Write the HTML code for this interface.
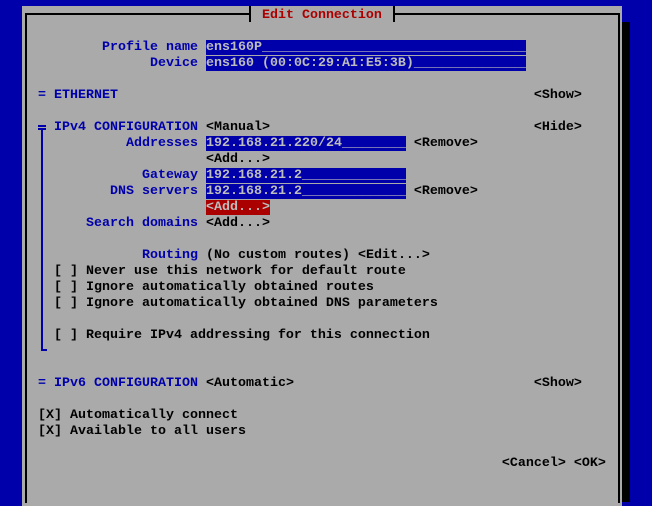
<!DOCTYPE html>
<html><head><meta charset="utf-8"><style>
html,body{margin:0;padding:0;}
body{width:652px;height:497px;background:#0000aa;position:relative;overflow:hidden;font-family:"Liberation Mono",monospace;}
.panel{position:absolute;left:22px;top:6px;width:600px;height:500px;background:#aaaaaa;}
.shadow{position:absolute;left:622px;top:22px;width:8px;height:480px;background:#000;}
.ln{position:absolute;background:#000;}
.bl{position:absolute;background:#0000aa;}
pre{position:absolute;left:6px;top:8px;margin:0;font-family:"Liberation Mono",monospace;font-size:13.33px;line-height:16px;font-weight:bold;color:#000;white-space:pre;}
.b{color:#0000aa}
.r{color:#aa0000}
.f{background:#0000aa;color:#bdbdbd}
.a{background:#aa0000;color:#bdbdbd}
</style></head><body>
<div class="panel"></div>
<div class="shadow"></div>
<div class="ln" style="left:25px;top:13px;width:226px;height:2px"></div>
<div class="ln" style="left:393px;top:13px;width:227px;height:2px"></div>
<div class="ln" style="left:249px;top:6px;width:2px;height:16px"></div>
<div class="ln" style="left:393px;top:6px;width:2px;height:16px"></div>
<div class="ln" style="left:25px;top:13px;width:2px;height:490px"></div>
<div class="ln" style="left:618px;top:13px;width:2px;height:490px"></div>
<div class="bl" style="left:38px;top:125px;width:8px;height:2px"></div>
<div class="bl" style="left:38px;top:128px;width:8px;height:2px"></div>
<div class="bl" style="left:41px;top:128px;width:2px;height:222px"></div>
<div class="bl" style="left:41px;top:349px;width:6px;height:2px"></div>
<pre>                                <span class="r">Edit Connection</span>

            <span class="b">Profile name</span> <span class="f">ens160P_________________________________</span>
                  <span class="b">Device</span> <span class="f">ens160 (00:0C:29:A1:E5:3B)______________</span>

    <span class="b">= ETHERNET</span>                                                    &lt;Show&gt;

      <span class="b">IPv4 CONFIGURATION</span> &lt;Manual&gt;                                 &lt;Hide&gt;
               <span class="b">Addresses</span> <span class="f">192.168.21.220/24________</span> &lt;Remove&gt;
                         &lt;Add...&gt;
                 <span class="b">Gateway</span> <span class="f">192.168.21.2_____________</span>
             <span class="b">DNS servers</span> <span class="f">192.168.21.2_____________</span> &lt;Remove&gt;
                         <span class="a">&lt;Add...&gt;</span>
          <span class="b">Search domains</span> &lt;Add...&gt;

                 <span class="b">Routing</span> (No custom routes) &lt;Edit...&gt;
      [ ] Never use this network for default route
      [ ] Ignore automatically obtained routes
      [ ] Ignore automatically obtained DNS parameters

      [ ] Require IPv4 addressing for this connection


    <span class="b">= IPv6 CONFIGURATION</span> &lt;Automatic&gt;                              &lt;Show&gt;

    [X] Automatically connect
    [X] Available to all users

                                                              &lt;Cancel&gt; &lt;OK&gt;</pre>
</body></html>
